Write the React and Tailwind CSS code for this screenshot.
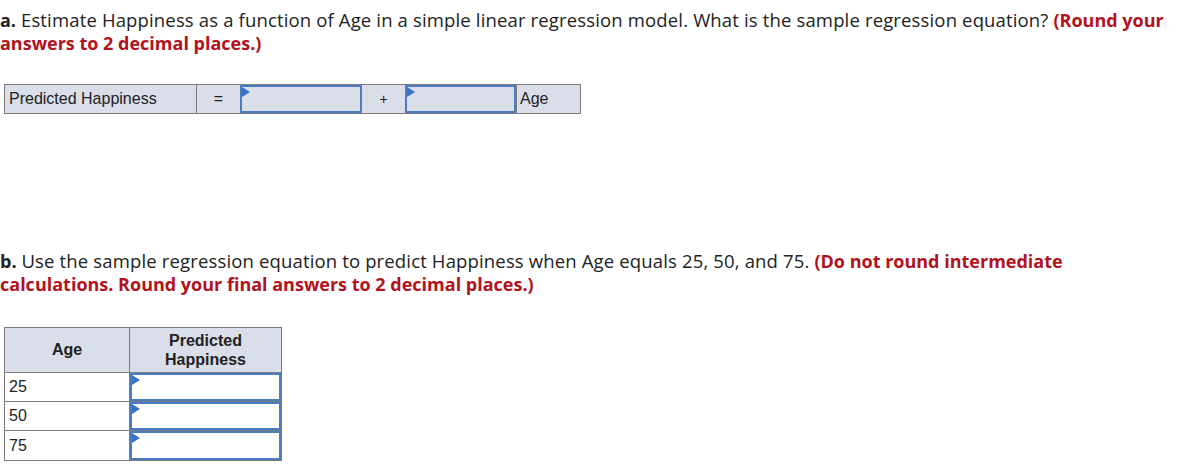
import React from "react";

const Tri = () => (
  <span className="absolute left-0 top-0 w-0 h-0 border-t-[5px] border-b-[5px] border-l-[8px] border-t-transparent border-b-transparent border-l-[#3a73c4]" />
);

const Input = ({ w, bg }) => (
  <div className={`relative ${w} ${bg} border-2 border-[#4b7cc2] self-stretch`}>
    <Tri />
  </div>
);

export default function App() {
  return (
    <div className="w-[1187px] h-[475px] bg-white text-[#222] overflow-hidden">
      <div className="w-[1174px] font-['Open_Sans',sans-serif] text-[18.5px] tracking-[0.15px] leading-[23px] pt-[8px]">
        <span className="font-bold text-[18px] leading-none tracking-normal">a.</span> Estimate Happiness as a function of Age in a simple linear regression model. What is the sample regression equation?{" "}
        <span className="font-bold text-[18px] leading-none tracking-normal text-[#b3111c]">(Round your answers to 2 decimal places.)</span>
      </div>

      <div className="mt-[30px] ml-[4px] flex w-[577px] h-[30px] border border-[#7b7b7b] bg-[#d9dee8] font-['Liberation_Sans',Arial,sans-serif] text-[16px] text-[#222]">
        <div className="w-[192px] flex items-center pl-[4px] border-r border-[#7b7b7b]">Predicted Happiness</div>
        <div className="w-[43px] flex items-center justify-center">=</div>
        <Input w="w-[122px]" bg="bg-[#d9dee8]" />
        <div className="w-[43px] flex items-center justify-center text-[14px]">+</div>
        <Input w="w-[111px]" bg="bg-[#d9dee8]" />
        <div className="flex-1 flex items-center pl-[3px] border-l border-[#7b7b7b]">Age</div>
      </div>

      <div className="w-[1174px] font-['Open_Sans',sans-serif] text-[18.5px] tracking-[0.15px] leading-[23px] mt-[135px]">
        <span className="font-bold text-[18px] leading-none tracking-normal">b.</span> Use the sample regression equation to predict Happiness when Age equals 25, 50, and 75.{" "}
        <span className="font-bold text-[18px] leading-none tracking-normal text-[#b3111c]">(Do not round intermediate calculations. Round your final answers to 2 decimal places.)</span>
      </div>

      <div className="mt-[32px] ml-[4px] w-[278px] border border-[#7b7b7b] font-['Liberation_Sans',Arial,sans-serif] text-[16px] text-[#222]">
        <div className="flex h-[45px] bg-[#d9dee8] border-b border-[#7b7b7b] font-bold">
          <div className="w-[125px] flex items-center justify-center border-r border-[#7b7b7b]">Age</div>
          <div className="flex-1 flex items-center justify-center text-center leading-[19px]">Predicted<br />Happiness</div>
        </div>
        {["25", "50", "75"].map((v, i) => (
          <div key={v} className={`flex h-[29px] ${i < 2 ? "border-b border-[#7b7b7b]" : ""}`}>
            <div className="w-[125px] flex items-center pl-[4px] border-r border-[#7b7b7b]">{v}</div>
            <Input w="flex-1" bg="bg-white" />
          </div>
        ))}
      </div>
    </div>
  );
}
